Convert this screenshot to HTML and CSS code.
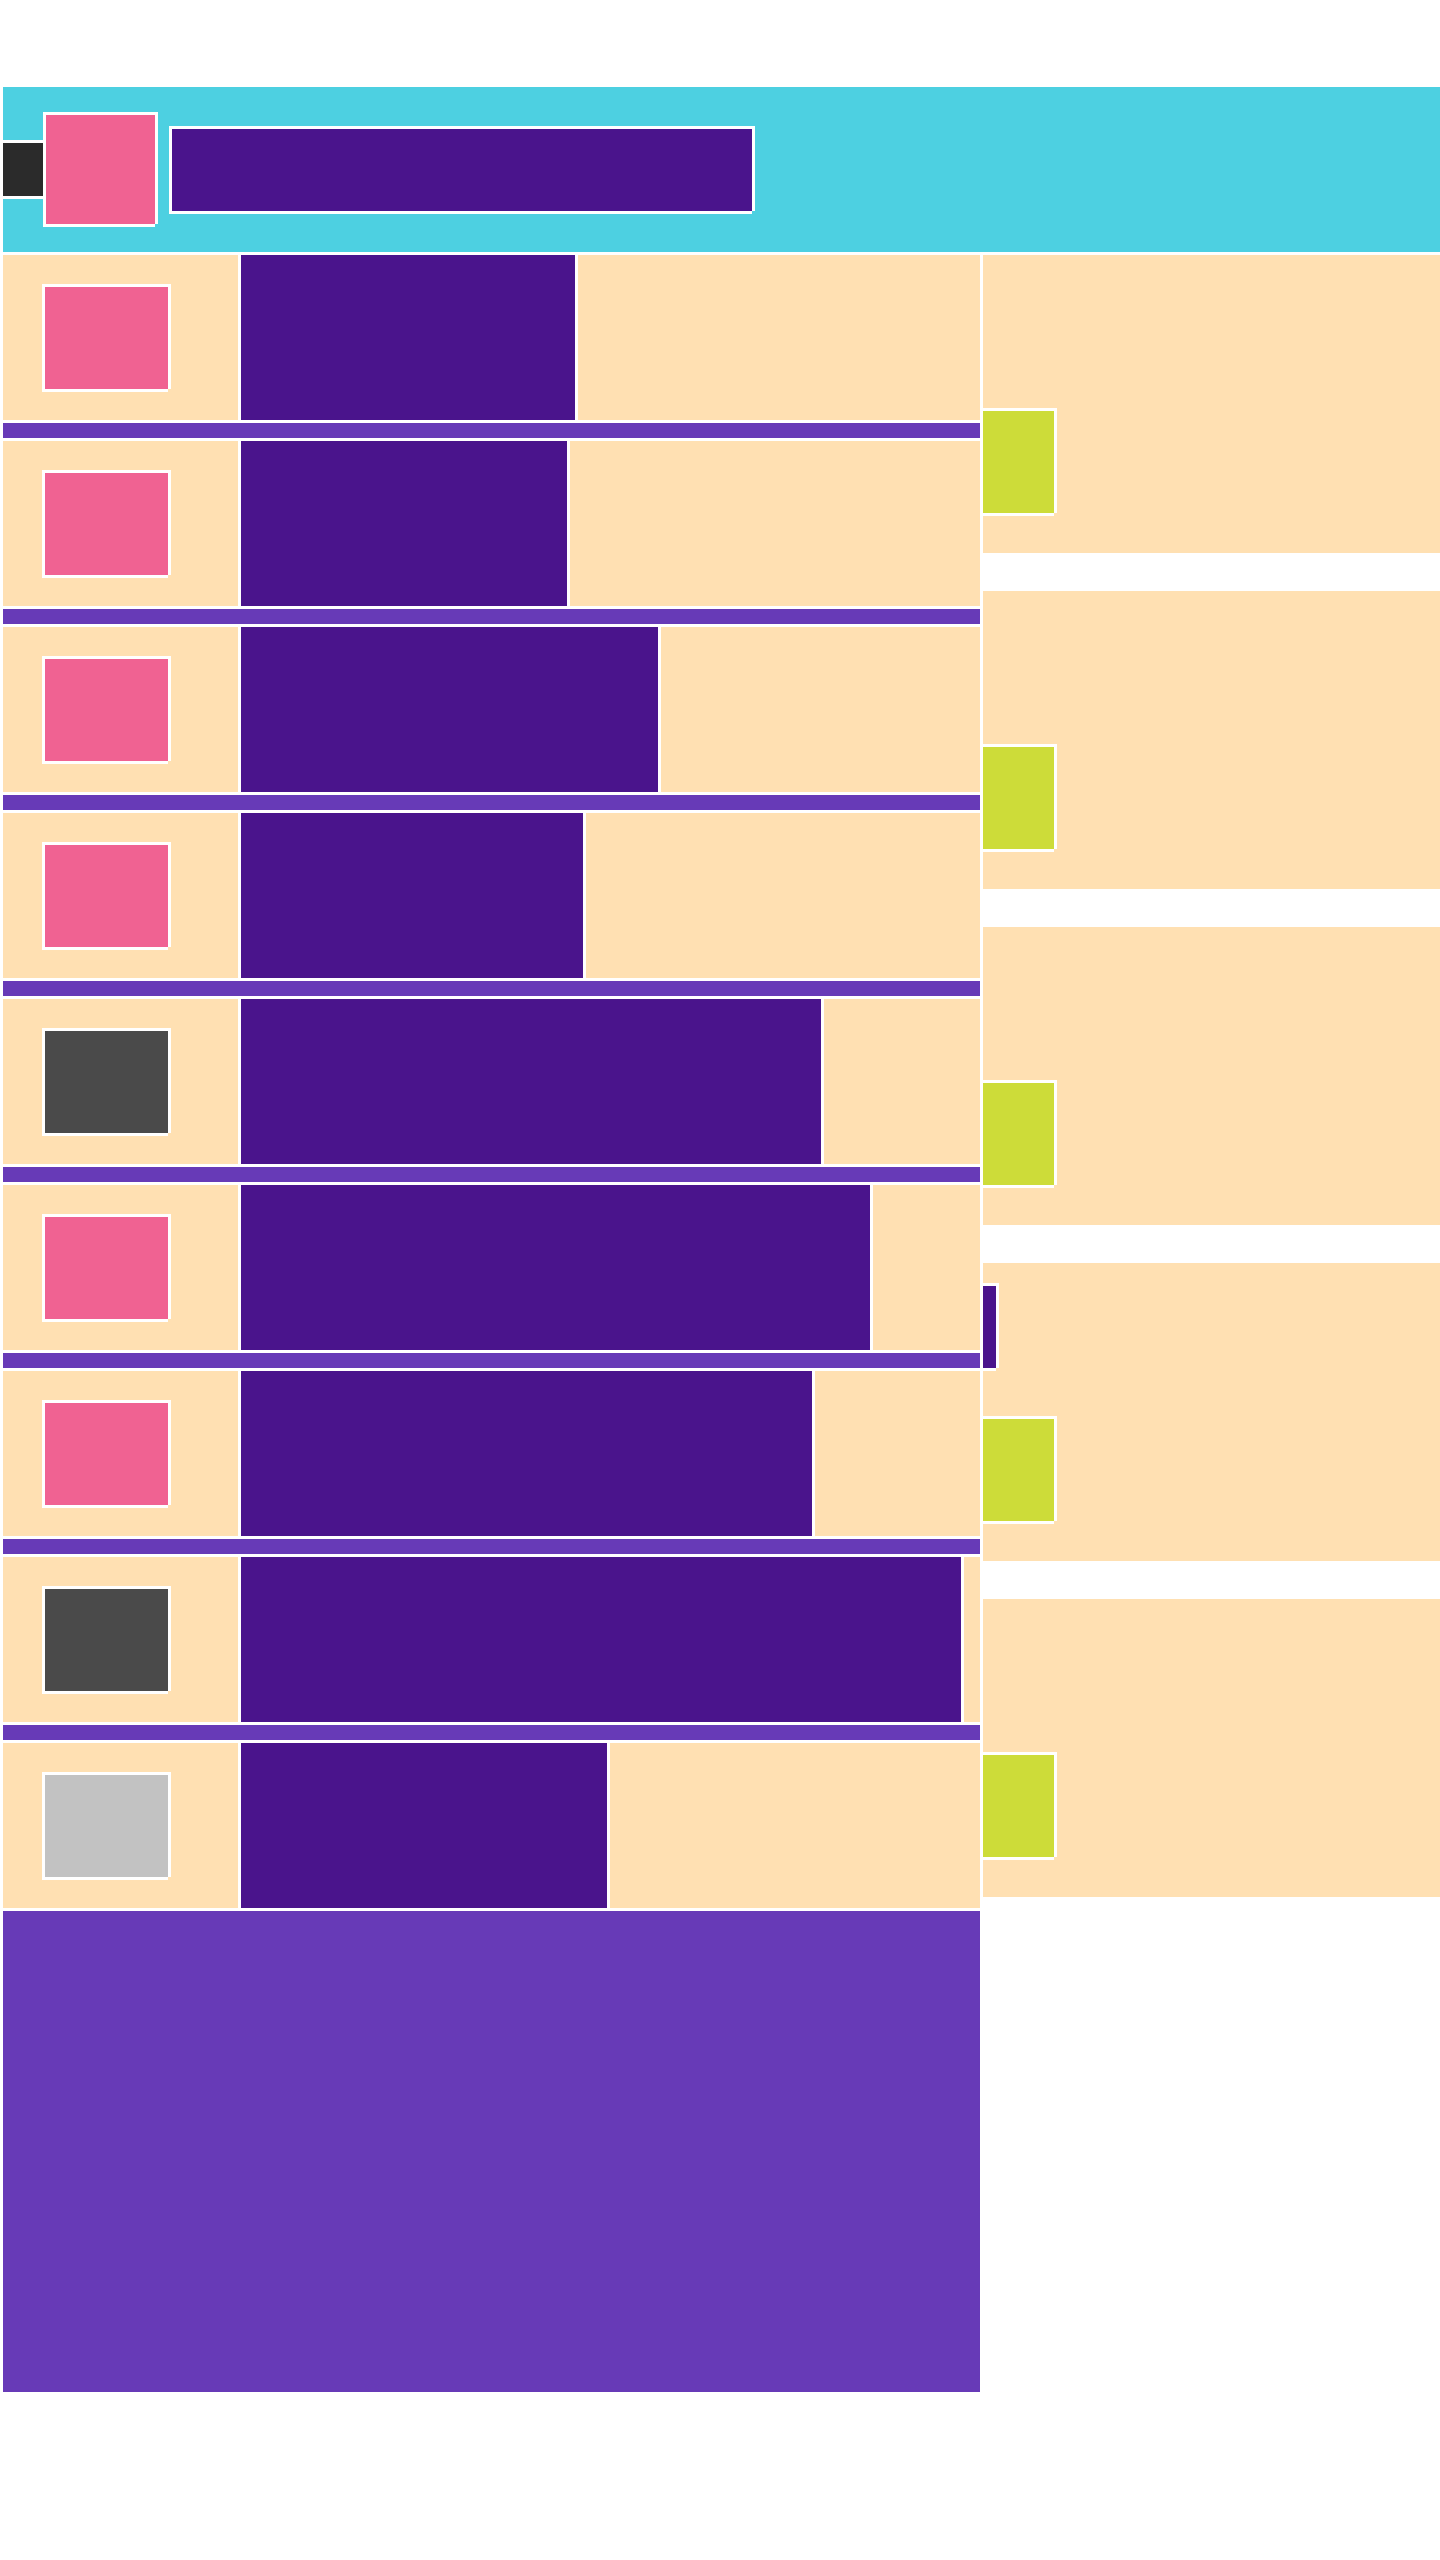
FILE: index.html
```html
<!DOCTYPE html>
<html>
<head>
<meta charset="utf-8">
<title>Layout</title>
<link rel="stylesheet" href="styles.css">
</head>
<body>
<div class="page">
  <header class="header">
    <div class="header-tab framed"></div>
    <div class="header-logo framed"></div>
    <div class="header-title framed"></div>
  </header>
  <div class="main">
    <div class="list">
      <div class="row">
        <div class="row-media"><div class="thumb thumb-pink framed"></div></div>
        <div class="row-body" style="width:334px"></div>
        <div class="row-rest"></div>
      </div>
      <div class="divider"></div>
      <div class="row">
        <div class="row-media"><div class="thumb thumb-pink framed"></div></div>
        <div class="row-body" style="width:326px"></div>
        <div class="row-rest"></div>
      </div>
      <div class="divider"></div>
      <div class="row">
        <div class="row-media"><div class="thumb thumb-pink framed"></div></div>
        <div class="row-body" style="width:417px"></div>
        <div class="row-rest"></div>
      </div>
      <div class="divider"></div>
      <div class="row">
        <div class="row-media"><div class="thumb thumb-pink framed"></div></div>
        <div class="row-body" style="width:342px"></div>
        <div class="row-rest"></div>
      </div>
      <div class="divider"></div>
      <div class="row">
        <div class="row-media"><div class="thumb thumb-dark framed"></div></div>
        <div class="row-body" style="width:580px"></div>
        <div class="row-rest"></div>
      </div>
      <div class="divider"></div>
      <div class="row">
        <div class="row-media"><div class="thumb thumb-pink framed"></div></div>
        <div class="row-body" style="width:629px"></div>
        <div class="row-rest"></div>
      </div>
      <div class="divider"></div>
      <div class="row">
        <div class="row-media"><div class="thumb thumb-pink framed"></div></div>
        <div class="row-body" style="width:571px"></div>
        <div class="row-rest"></div>
      </div>
      <div class="divider"></div>
      <div class="row">
        <div class="row-media"><div class="thumb thumb-dark framed"></div></div>
        <div class="row-body" style="width:720px"></div>
        <div class="row-rest"></div>
      </div>
      <div class="divider"></div>
      <div class="row">
        <div class="row-media"><div class="thumb thumb-light framed"></div></div>
        <div class="row-body" style="width:366px"></div>
        <div class="row-rest"></div>
      </div>
      <div class="footer-block"></div>
    </div>
    <aside class="side">
      <div class="card"><div class="chip framed"></div></div>
      <div class="card"><div class="chip framed"></div></div>
      <div class="card"><div class="chip framed"></div></div>
      <div class="card"><div class="card-bar framed"></div><div class="chip framed"></div></div>
      <div class="card"><div class="chip framed"></div></div>
    </aside>
  </div>
</div>
</body>
</html>
```

FILE: styles.css
```css
html, body {
  margin: 0;
  padding: 0;
  background: #ffffff;
}

.page {
  padding-top: 87px;
  padding-left: 3px;
  width: 1437px;
}

.framed {
  box-shadow:
    -3px -3px 0 #ffffff,
    3px -3px 0 #ffffff,
    -3px 3px 0 #ffffff,
    3px 0 0 #ffffff,
    0 3px 0 #ffffff;
}

.header {
  position: relative;
  height: 165px;
  background: #4dd0e1;
  display: flex;
  align-items: center;
  padding-left: 43px;
  gap: 17px;
  box-sizing: border-box;
}

.header-tab {
  position: absolute;
  left: 0;
  top: 56px;
  width: 42px;
  height: 53px;
  background: #2b2b2b;
}

.header-logo {
  position: relative;
  width: 109px;
  height: 109px;
  background: #f06292;
  flex: none;
}

.header-title {
  width: 580px;
  height: 82px;
  background: #4a148c;
  flex: none;
}

.main {
  display: flex;
  gap: 3px;
  margin-top: 3px;
  align-items: flex-start;
}

.list {
  width: 977px;
  flex: none;
  display: flex;
  flex-direction: column;
  gap: 3px;
}

.row {
  height: 165px;
  display: flex;
  gap: 3px;
}

.row-media {
  width: 235px;
  flex: none;
  background: #ffe0b2;
  display: flex;
  align-items: center;
  padding-left: 42px;
  box-sizing: border-box;
}

.thumb {
  width: 123px;
  height: 102px;
}

.thumb-pink { background: #f06292; }
.thumb-dark { background: #4a4a4a; }
.thumb-light { background: #c2c2c2; }

.row-body {
  flex: none;
  background: #4a148c;
}

.row-rest {
  flex: 1;
  background: #ffe0b2;
}

.divider {
  height: 15px;
  background: #673ab7;
}

.footer-block {
  height: 481px;
  background: #673ab7;
}

.side {
  flex: 1;
  display: flex;
  flex-direction: column;
  gap: 38px;
}

.card {
  position: relative;
  height: 298px;
  background: #ffe0b2;
  padding-top: 156px;
  box-sizing: border-box;
}

.chip {
  width: 71px;
  height: 102px;
  background: #cddc39;
}

.card-bar {
  position: absolute;
  left: 0;
  top: 23px;
  width: 13px;
  height: 82px;
  background: #4a148c;
}
```
